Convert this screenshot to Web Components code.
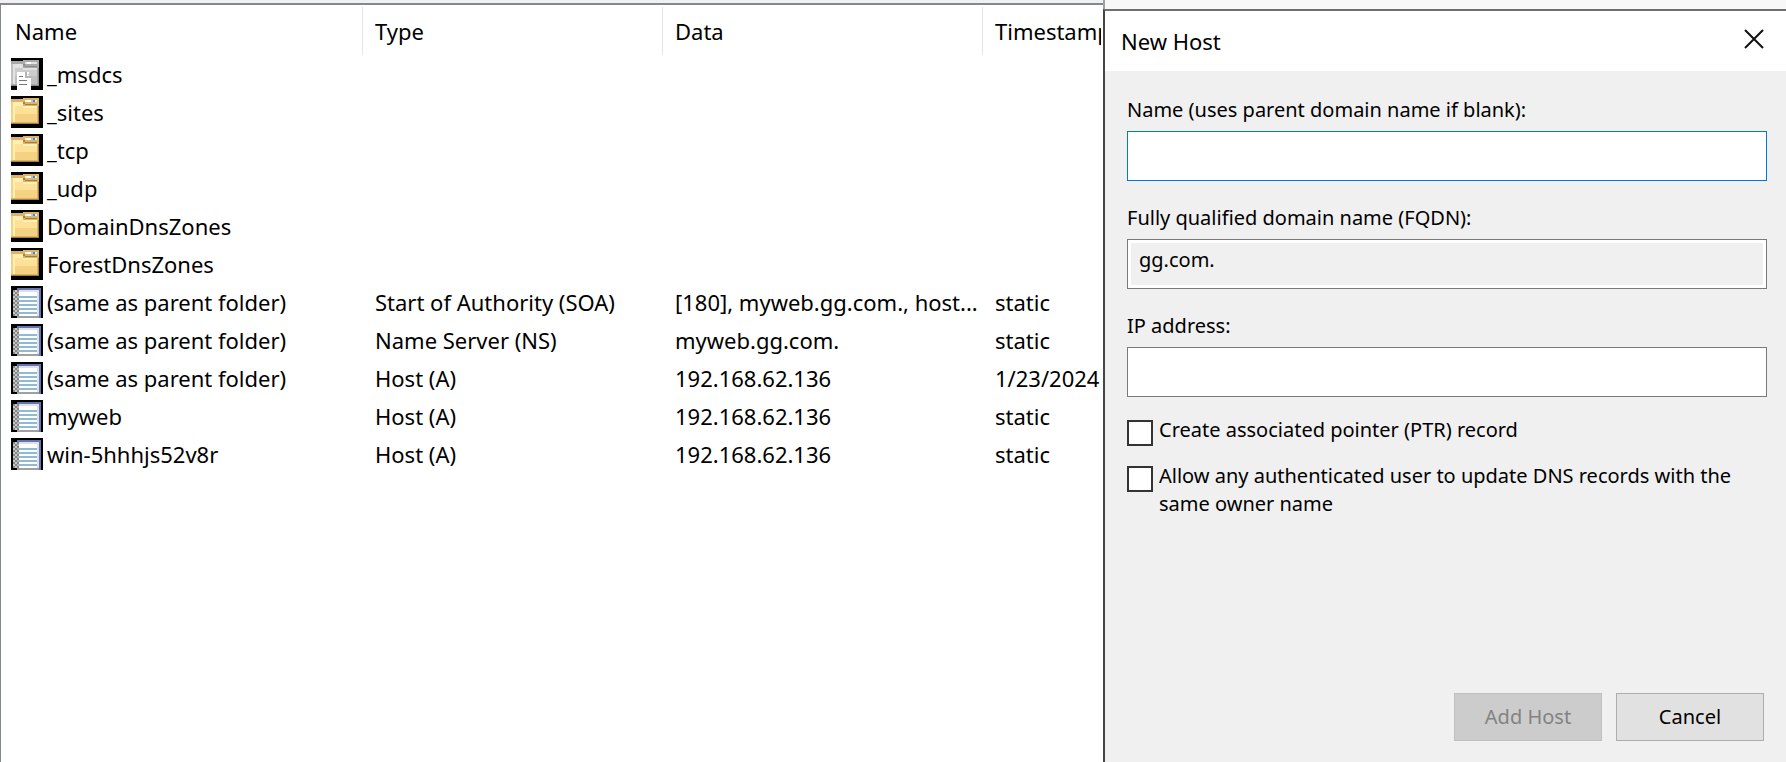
<!DOCTYPE html>
<html lang="en">
<head>
<meta charset="utf-8">
<title>DNS Manager</title>
<style>
  body { margin: 0; background: #fff; color: #000; font-family: "Noto Sans", "Segoe UI", sans-serif; }
</style>
</head>
<body>
<dns-console>
  <record-list slot="list"></record-list>
  <host-dialog slot="dialog" heading="New Host">
    <text-field kind="focused">Name (uses parent domain name if blank):</text-field>
    <text-field kind="readonly" value="gg.com.">Fully qualified domain name (FQDN):</text-field>
    <text-field>IP address:</text-field>
    <check-option>Create associated pointer (PTR) record</check-option>
    <check-option>Allow any authenticated user to update DNS records with the same owner name</check-option>
    <push-button slot="actions" disabled>Add Host</push-button>
    <push-button slot="actions">Cancel</push-button>
  </host-dialog>
</dns-console>

<script>
const define = (name, html, setup) => {
  const template = document.createElement('template');
  template.innerHTML = html;
  customElements.define(name, class extends HTMLElement {
    connectedCallback() {
      if (this.shadowRoot) return;
      const root = this.attachShadow({ mode: 'open' });
      root.append(template.content.cloneNode(true));
      if (setup) setup(this, root);
    }
  });
};

define('dns-console', `
  <style>
    :host { display: grid; grid-template-columns: minmax(0, 1103fr) minmax(0, 683fr); min-height: 100vh; overflow: hidden; }
    .list { display: flex; flex-direction: column; background: #f0f0f0; padding-top: 3px; }
    .dialog { display: flex; flex-direction: column; }
    .strip { height: 9px; border-left: 2px solid #a0a0a4; background: #f8f8f8; }
    ::slotted(*) { flex: 1; }
  </style>
  <div class="list"><slot name="list"></slot></div>
  <div class="dialog"><div class="strip"></div><slot name="dialog"></slot></div>`);

/* Icons are drawn on a 16-unit grid, shown at 32px. */
const folder = (light, base, shade, edge, dark, extra) => `
  <path fill="#000" d="M0 0h16v16H0z"/>
  <path fill="${edge}" d="M0 1.5h6V1h8v13H0z"/>
  <path fill="${base}" d="M0 3h6v2h7v8H0z"/>
  <path fill="${shade}" d="M2 9h11v4H2zM0 3h1v10H0z"/>
  <path fill="${light}" d="M1 3h5v1H1zM1 3h1v10H1zM2 4h4v1H2zM6 5h7v1H6z"/>
  <path fill="${light}" d="M7 2h6v1H7z"/>
  <path fill="${dark}" d="M6 3h1v1H6zM7 4h6v.5H7zM0 13.5h14v.5H0zM13.5 5h.5v9h-.5z"/>${extra}`;

const ICONS = {
  folder: folder('#ffefb5', '#fce196', '#f5d283', '#dcb469', '#a4803f',
    '<path fill="#fff" d="M8 2h2v1H8z"/><path fill="#a9c4ff" d="M10 2h1v1h-1z"/><path fill="#2d8fe0" d="M11 2h1v1h-1z"/>'),
  delegation: folder('#e2e2e2', '#cbcbcb', '#bfbfbf', '#a9a9a9', '#8c8c8c',
    '<path fill="#fff" d="M8 2h2v1H8zM8 7h1v1H8zM3 7h4l3 3v6H3z"/><path fill="#b5b5b5" d="M7 7h1v2h2v1H7z"/><path fill="#777" d="M4 9h2v.5H4zM4 11h4v.5H4zM4 13h4v.5H4z"/>'),
  record: `
    <path fill="#000" d="M0 0h16v16H0z"/>
    <path fill="#6275b0" d="M3 1h12v15h-1V2H3z"/>
    <path fill="#e0e0e4" d="M4 2h10v13H4z"/>
    <path fill="#fff" d="M4 3h9v12H4z"/>
    <path fill="#8fbad3" d="M4 5h9v1H4zM4 7h9v1H4zM4 9h9v1H4zM4 11h9v1H4zM4 13h9v1H4z"/>
    <path fill="#a0a0a2" d="M3 15h11v1H3z"/>
    <path fill="#858585" d="M1 2h3v13H1z"/>
    <path fill="#c8c8c8" d="M1 3h1v1H1zM1 5h1v1H1zM1 7h1v1H1zM1 9h1v1H1zM1 11h1v1H1zM1 13h1v1H1zM2 2h1v1H2zM2 4h1v1H2zM2 6h1v1H2zM2 8h1v1H2zM2 10h1v1H2zM2 12h1v1H2zM2 14h1v1H2z"/>
    <path fill="#b5b5b8" d="M3 3h1v1H3zM3 5h1v1H3zM3 7h1v1H3zM3 9h1v1H3zM3 11h1v1H3zM3 13h1v1H3z"/>`
};

define('record-icon', `
  <style>
    :host { display: block; flex: none; width: 32px; height: 32px; }
    svg { display: block; width: 100%; height: 100%; }
  </style>
  <svg viewBox="0 0 16 16" shape-rendering="crispEdges" aria-hidden="true"></svg>`,
  (host, root) => { root.querySelector('svg').innerHTML = ICONS[host.getAttribute('kind')]; });

const RECORDS = [
  ['delegation', '_msdcs'],
  ['folder', '_sites'],
  ['folder', '_tcp'],
  ['folder', '_udp'],
  ['folder', 'DomainDnsZones'],
  ['folder', 'ForestDnsZones'],
  ['record', '(same as parent folder)', 'Start of Authority (SOA)', '[180], myweb.gg.com., host...', 'static'],
  ['record', '(same as parent folder)', 'Name Server (NS)', 'myweb.gg.com.', 'static'],
  ['record', '(same as parent folder)', 'Host (A)', '192.168.62.136', '1/23/2024'],
  ['record', 'myweb', 'Host (A)', '192.168.62.136', 'static'],
  ['record', 'win-5hhhjs52v8r', 'Host (A)', '192.168.62.136', 'static']
];

define('record-list', `
  <style>
    :host { display: block; background: #fff; border-top: 2px solid #828790; border-left: 1px solid #828790; padding: 2px 2px 0 0; }
    .view { overflow: hidden; }
    table { width: 1142px; table-layout: fixed; border-collapse: separate; border-spacing: 0; font-size: 22px; line-height: 30px; }
    .name { width: 362px; } .type { width: 300px; } .data { width: 320px; }
    th, td { box-sizing: border-box; padding: 0 0 0 12px; text-align: left; font-weight: 400; white-space: nowrap; }
    th { height: 48px; border-right: 1px solid #e5e5e5; }
    td { height: 38px; }
    th:first-child { padding-left: 14px; }
    td:first-child { padding-left: 10px; }
    .item { display: flex; align-items: center; gap: 4px; }
  </style>
  <div class="view">
    <table>
      <colgroup><col class="name"><col class="type"><col class="data"><col></colgroup>
      <thead><tr><th>Name</th><th>Type</th><th>Data</th><th>Timestamp</th></tr></thead>
      <tbody></tbody>
    </table>
  </div>`,
  (host, root) => {
    root.querySelector('tbody').innerHTML = RECORDS.map(([kind, name, type = '', data = '', stamp = '']) =>
      `<tr><td><div class="item"><record-icon kind="${kind}"></record-icon><span>${name}</span></div></td><td>${type}</td><td>${data}</td><td>${stamp}</td></tr>`).join('');
  });

define('host-dialog', `
  <style>
    :host { display: flex; flex-direction: column; border-top: 2px solid #6e6e6e; border-left: 2px solid #454545; background: #f0f0f0; }
    header { display: flex; align-items: center; justify-content: space-between; height: 60px; padding: 0 12px 0 16px; background: #fff; }
    h1 { margin: 0; font-size: 22px; line-height: 30px; font-weight: 400; }
    .close { align-self: flex-start; display: grid; place-items: center; width: 40px; height: 56px; padding: 0; border: 0; background: none; }
    svg { display: block; }
    form { flex: 1; display: flex; flex-direction: column; padding: 25px 19px 21px 22px; }
    .actions { display: flex; justify-content: flex-end; gap: 14px; margin-top: auto; padding-right: 3px; }
  </style>
  <header>
    <h1></h1>
    <button class="close" type="button" aria-label="Close">
      <svg width="20" height="20" viewBox="0 0 20 20" fill="none" stroke="#111" stroke-width="2"><path d="M1 1l18 18M19 1L1 19"/></svg>
    </button>
  </header>
  <form><slot></slot><div class="actions"><slot name="actions"></slot></div></form>`,
  (host, root) => { root.querySelector('h1').textContent = host.getAttribute('heading'); });

define('text-field', `
  <style>
    :host { display: flex; flex-direction: column; gap: 7px; margin-bottom: 23px; font-size: 20px; line-height: 28px; }
    input { box-sizing: border-box; width: 100%; height: 50px; margin: 0; padding: 0 11px; border: 1px solid #7a7a7a; border-radius: 0; outline: 0; background: #fff; color: #000; font: inherit; }
    input.focused { border-color: #0078d7; }
    input.readonly { padding-bottom: 10px; background: #f0f0f0; box-shadow: inset 0 0 0 3px #fff; }
  </style>
  <label for="box"><slot></slot></label>
  <input id="box" type="text">`,
  (host, root) => {
    const box = root.querySelector('input');
    const kind = host.getAttribute('kind');
    if (kind) box.className = kind;
    box.readOnly = kind === 'readonly';
    box.value = host.getAttribute('value') || '';
  });

define('check-option', `
  <style>
    :host { display: flex; align-items: flex-start; gap: 6px; margin: -4px 0 20px; font-size: 20px; line-height: 28px; }
    input { appearance: none; flex: none; box-sizing: border-box; width: 26px; height: 26px; margin: 4px 0 0; border: 2px solid #333; border-radius: 0; background: #fff; }
  </style>
  <input id="tick" type="checkbox"><label for="tick"><slot></slot></label>`);

define('push-button', `
  <style>
    :host { display: block; }
    button { box-sizing: border-box; width: 148px; height: 48px; padding: 0; border: 1px solid #adadad; border-radius: 0; background: #e1e1e1; color: #000; font: 20px/28px "Noto Sans", sans-serif; }
    button:disabled { border-color: #bfbfbf; background: #ccc; color: #838383; }
  </style>
  <button type="button"><slot></slot></button>`,
  (host, root) => { root.querySelector('button').disabled = host.hasAttribute('disabled'); });
</script>
</body>
</html>
